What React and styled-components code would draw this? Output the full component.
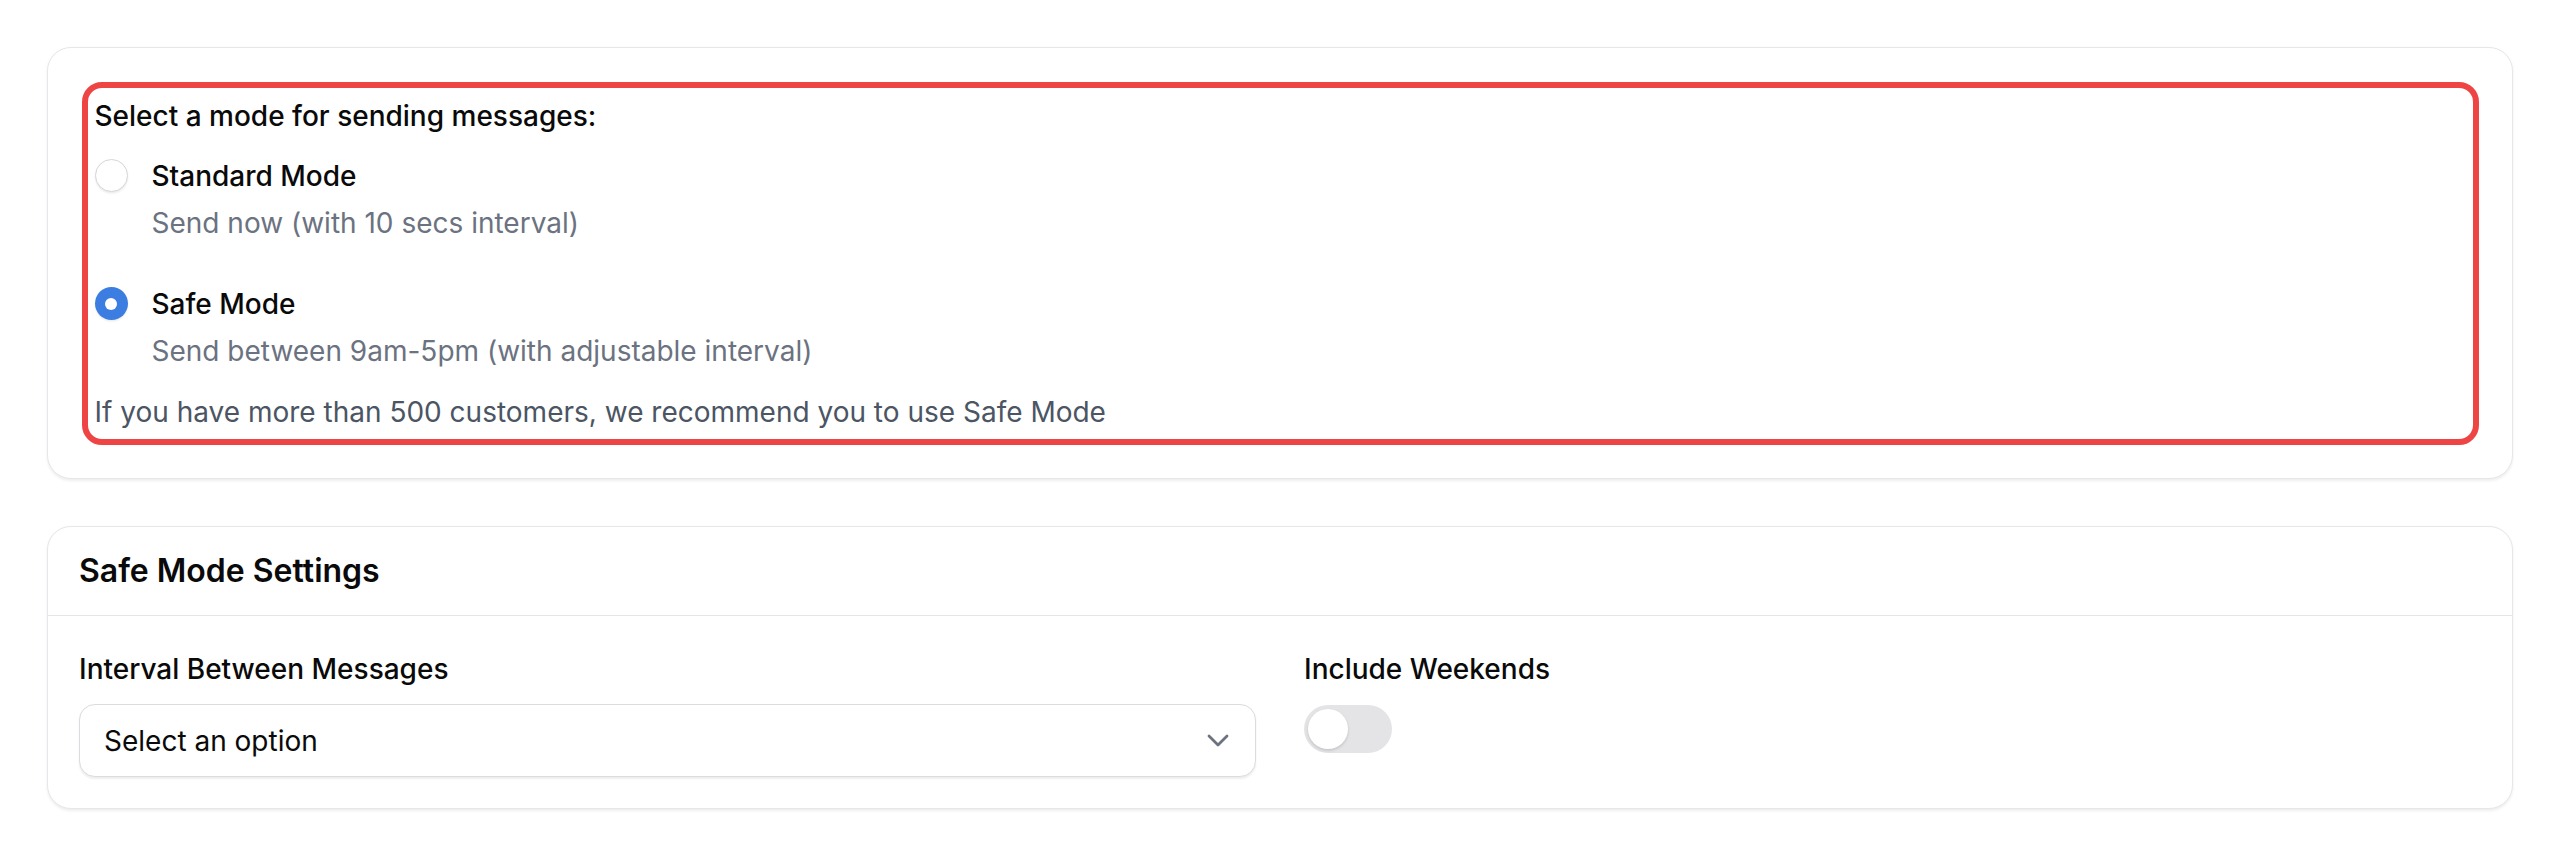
import React from "react";
import styled, { createGlobalStyle } from "styled-components";

const Global = createGlobalStyle`
  html, body { margin: 0; padding: 0; background: #ffffff; }
  body { font-family: Inter, "Noto Sans", Arial, sans-serif; color: #0a0a0a; -webkit-font-smoothing: antialiased; }
  * { box-sizing: border-box; }
`;

const Page = styled.div`
  display: flex;
  flex-direction: column;
  gap: 47px;
  padding: 47px 47px;
`;

const Card = styled.section`
  background: #fff;
  border: 1.5px solid #e7e7e9;
  border-radius: 24px;
  box-shadow: 0 1.5px 3px rgba(0, 0, 0, 0.07);
  padding: ${(p) => p.$padding || "0"};
`;

const Highlight = styled.div`
  border: 6px solid #ef4444;
  border-radius: 20px;
  padding: 7px 7px 6px 7px;
  display: flex;
  flex-direction: column;
`;

const Prompt = styled.div`
  font-size: 28px;
  line-height: 42px;
  font-weight: 500;
  color: #0a0a0a;
  margin-bottom: 18px;
`;

const Options = styled.div`
  display: flex;
  flex-direction: column;
  gap: 39px;
`;

const Option = styled.label`
  display: grid;
  grid-template-columns: 33px 1fr;
  column-gap: 24px;
  row-gap: 5px;
  align-items: center;
  cursor: pointer;
`;

const Radio = styled.span`
  width: 33px;
  height: 33px;
  border-radius: 50%;
  display: flex;
  align-items: center;
  justify-content: center;
  background: ${(p) => (p.$checked ? "#3b7de0" : "#fff")};
  border: ${(p) => (p.$checked ? "none" : "1.5px solid #d6d6da")};
  box-shadow: 0 1.5px 2px rgba(0, 0, 0, 0.08);
  &::after {
    content: "";
    display: ${(p) => (p.$checked ? "block" : "none")};
    width: 12px;
    height: 12px;
    border-radius: 50%;
    background: #fff;
  }
`;

const OptionTitle = styled.span`
  font-size: 28px;
  line-height: 42px;
  font-weight: 500;
  color: #0a0a0a;
`;

const OptionDesc = styled.span`
  grid-column: 2;
  font-size: 28px;
  line-height: 42px;
  font-weight: 400;
  color: #6b7280;
`;

const Note = styled.div`
  margin-top: 19px;
  font-size: 28px;
  line-height: 42px;
  font-weight: 400;
  color: #4b5563;
`;

const CardHeader = styled.div`
  height: 89px;
  display: flex;
  align-items: center;
  padding: 0 31px;
  border-bottom: 1.5px solid #e5e5e7;
`;

const CardTitle = styled.h2`
  margin: 0;
  font-size: 32px;
  line-height: 40px;
  font-weight: 600;
  color: #0a0a0a;
`;

const CardBody = styled.div`
  padding: 32px 31px 30.5px;
  display: grid;
  grid-template-columns: 1fr 1fr;
  column-gap: 48px;
`;

const Field = styled.div`
  display: flex;
  flex-direction: column;
  gap: 14px;
`;

const FieldLabel = styled.div`
  font-size: 28px;
  line-height: 42px;
  font-weight: 500;
  color: #0a0a0a;
`;

const SelectBox = styled.button`
  height: 73px;
  width: 100%;
  display: flex;
  align-items: center;
  justify-content: space-between;
  padding: 0 26px 0 24px;
  background: #fff;
  border: 1.5px solid #dcdcdf;
  border-radius: 16px;
  box-shadow: 0 1.5px 2px rgba(0, 0, 0, 0.07);
  font-family: inherit;
  font-size: 28px;
  color: #0a0a0a;
  cursor: pointer;
  text-align: left;
`;

const Toggle = styled.span`
  margin-top: 1px;
  width: 88px;
  height: 48px;
  border-radius: 24px;
  background: #e4e4e7;
  display: flex;
  align-items: center;
  padding: 0 4px;
  &::after {
    content: "";
    width: 40px;
    height: 40px;
    border-radius: 50%;
    background: #fff;
    box-shadow: 0 1.5px 3px rgba(0, 0, 0, 0.15);
  }
`;

const Chevron = () => (
  <svg width="22" height="13" viewBox="0 0 22 13" fill="none">
    <polyline points="2,2 11,11 20,2" stroke="#6b7280" strokeWidth="2.8" strokeLinecap="round" strokeLinejoin="round" />
  </svg>
);

export default function App() {
  return (
    <>
      <Global />
      <Page>
        <Card $padding="33.5px">
          <Highlight>
            <Prompt>Select a mode for sending messages:</Prompt>
            <Options>
              <Option>
                <Radio />
                <OptionTitle>Standard Mode</OptionTitle>
                <OptionDesc>Send now (with 10 secs interval)</OptionDesc>
              </Option>
              <Option>
                <Radio $checked />
                <OptionTitle>Safe Mode</OptionTitle>
                <OptionDesc>Send between 9am-5pm (with adjustable interval)</OptionDesc>
              </Option>
            </Options>
            <Note>If you have more than 500 customers, we recommend you to use Safe Mode</Note>
          </Highlight>
        </Card>
        <Card>
          <CardHeader>
            <CardTitle>Safe Mode Settings</CardTitle>
          </CardHeader>
          <CardBody>
            <Field>
              <FieldLabel>Interval Between Messages</FieldLabel>
              <SelectBox type="button">
                <span>Select an option</span>
                <Chevron />
              </SelectBox>
            </Field>
            <Field>
              <FieldLabel>Include Weekends</FieldLabel>
              <Toggle />
            </Field>
          </CardBody>
        </Card>
      </Page>
    </>
  );
}
